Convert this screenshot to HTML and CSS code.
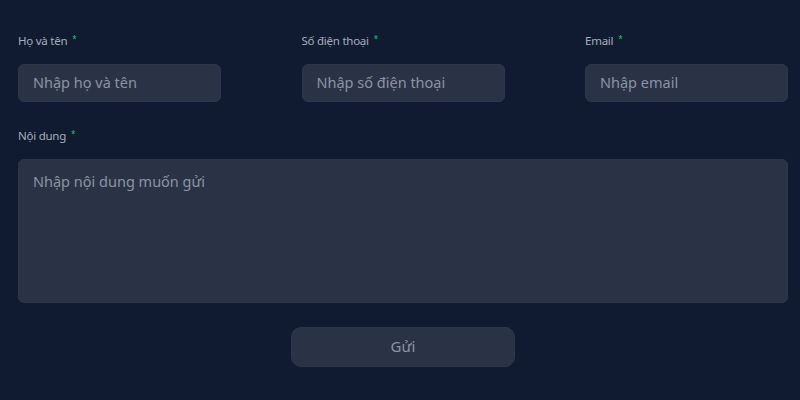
FILE: index.html
```html
<!DOCTYPE html>
<html lang="vi">
<head>
<meta charset="utf-8">
<link rel="stylesheet" href="styles.css">
</head>
<body>
<form class="contact">
  <div class="row">
    <div class="field">
      <label class="label">Họ và tên<span class="req">*</span></label>
      <input class="input" type="text" placeholder="Nhập họ và tên">
    </div>
    <div class="field">
      <label class="label">Số điện thoại<span class="req">*</span></label>
      <input class="input" type="text" placeholder="Nhập số điện thoại">
    </div>
    <div class="field">
      <label class="label">Email<span class="req">*</span></label>
      <input class="input" type="text" placeholder="Nhập email">
    </div>
  </div>
  <div class="field full">
    <label class="label">Nội dung<span class="req">*</span></label>
    <textarea class="input area" placeholder="Nhập nội dung muốn gửi"></textarea>
  </div>
  <div class="actions">
    <button class="btn" type="button">Gửi</button>
  </div>
</form>
</body>
</html>
```
FILE: styles.css
```css
html, body {
  margin: 0;
  padding: 0;
  background: #101a30;
  height: 100%;
}
body {
  font-family: "Noto Sans", "Open Sans", sans-serif;
}
.contact {
  width: 770px;
  margin-left: 18px;
  padding-top: 33px;
}
.row {
  display: flex;
  justify-content: space-between;
}
.field {
  width: 203px;
  display: flex;
  flex-direction: column;
}
.field.full {
  width: 100%;
  margin-top: 26px;
}
.label {
  font-size: 11.5px;
  line-height: 16px;
  height: 16px;
  color: #a7aebb;
  margin-bottom: 15px;
  letter-spacing: -0.25px;
}
.req {
  color: #22c55e;
  font-size: 8px;
  vertical-align: top;
  position: relative;
  top: -2px;
  margin-left: 5px;
}
.input {
  box-sizing: border-box;
  height: 38px;
  width: 100%;
  background: #2a3345;
  border: 1px solid #2e3749;
  border-radius: 6px;
  padding: 0 14px 2px;
  font-family: inherit;
  font-size: 14.5px;
  color: #cbd1db;
  outline: none;
}
.input::placeholder {
  color: #8b93a3;
}
.area {
  height: 144px;
  padding: 11px 14px;
  resize: none;
  line-height: 20px;
}
.actions {
  display: flex;
  justify-content: center;
  margin-top: 24px;
}
.btn {
  width: 224px;
  height: 40px;
  background: #2a3345;
  border: 1px solid #2e3749;
  border-radius: 10px;
  padding-bottom: 3px;
  font-family: inherit;
  font-size: 15px;
  color: #8b93a3;
  cursor: pointer;
}
```
